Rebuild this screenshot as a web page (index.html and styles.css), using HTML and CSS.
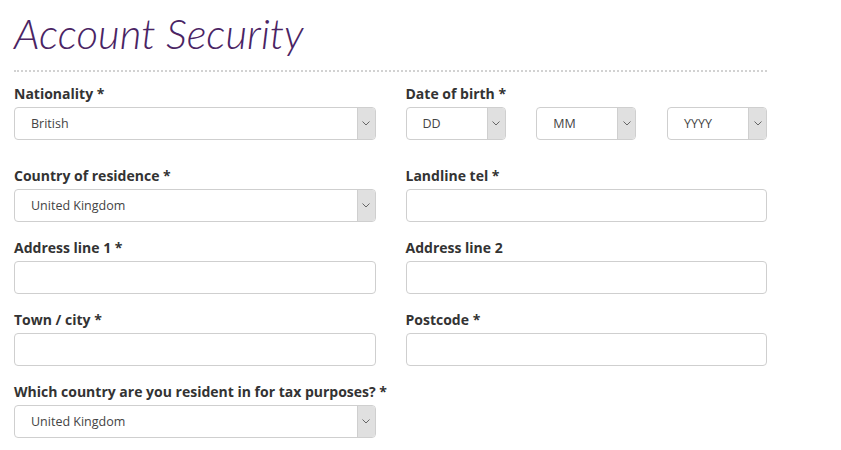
FILE: index.html
```html
<!DOCTYPE html>
<html lang="en">
<head>
<meta charset="utf-8">
<title>Account Security</title>
<link rel="stylesheet" href="styles.css">
</head>
<body>
<div class="page">
  <h1 class="title">Account Security</h1>
  <div class="rule"></div>
  <form class="form">
    <div class="field row-first">
      <label class="label">Nationality *</label>
      <div class="select"><span class="value">British</span><span class="arrow"><svg width="8" height="5" viewBox="0 0 8 5"><path d="M0.5 0.5 L4 4 L7.5 0.5" fill="none" stroke="#666" stroke-width="1"/></svg></span></div>
    </div>
    <div class="field row-first">
      <label class="label">Date of birth *</label>
      <div class="dob">
        <div class="select small"><span class="value">DD</span><span class="arrow"><svg width="8" height="5" viewBox="0 0 8 5"><path d="M0.5 0.5 L4 4 L7.5 0.5" fill="none" stroke="#666" stroke-width="1"/></svg></span></div>
        <div class="select small"><span class="value">MM</span><span class="arrow"><svg width="8" height="5" viewBox="0 0 8 5"><path d="M0.5 0.5 L4 4 L7.5 0.5" fill="none" stroke="#666" stroke-width="1"/></svg></span></div>
        <div class="select small"><span class="value">YYYY</span><span class="arrow"><svg width="8" height="5" viewBox="0 0 8 5"><path d="M0.5 0.5 L4 4 L7.5 0.5" fill="none" stroke="#666" stroke-width="1"/></svg></span></div>
      </div>
    </div>
    <div class="field">
      <label class="label">Country of residence *</label>
      <div class="select"><span class="value">United Kingdom</span><span class="arrow"><svg width="8" height="5" viewBox="0 0 8 5"><path d="M0.5 0.5 L4 4 L7.5 0.5" fill="none" stroke="#666" stroke-width="1"/></svg></span></div>
    </div>
    <div class="field">
      <label class="label">Landline tel *</label>
      <div class="input"></div>
    </div>
    <div class="field">
      <label class="label">Address line 1 *</label>
      <div class="input"></div>
    </div>
    <div class="field">
      <label class="label">Address line 2</label>
      <div class="input"></div>
    </div>
    <div class="field">
      <label class="label">Town / city *</label>
      <div class="input"></div>
    </div>
    <div class="field">
      <label class="label">Postcode *</label>
      <div class="input"></div>
    </div>
    <div class="field">
      <label class="label">Which country are you resident in for tax purposes? *</label>
      <div class="select"><span class="value">United Kingdom</span><span class="arrow"><svg width="8" height="5" viewBox="0 0 8 5"><path d="M0.5 0.5 L4 4 L7.5 0.5" fill="none" stroke="#666" stroke-width="1"/></svg></span></div>
    </div>
  </form>
</div>
</body>
</html>
```

FILE: styles.css
```css
* { box-sizing: border-box; }
html, body { margin: 0; padding: 0; background: #fff; }
body { font-family: "Open Sans", "Noto Sans", sans-serif; color: #333; }
.page { padding: 0 0 0 14px; width: 767px; }
.title {
  margin: 0;
  padding-top: 8px;
  font-family: Lato, "Open Sans", sans-serif;
  font-weight: 300;
  font-style: italic;
  font-size: 42px;
  line-height: 50px;
  color: #4a2464;
}
.rule { margin-top: 12px; border-top: 2px dotted #d2d2d2; }
.form {
  display: grid;
  grid-template-columns: minmax(0, 1fr) minmax(0, 1fr);
  column-gap: 30px;
  row-gap: 15px;
  margin-top: 11px;
}
.row-first { margin-bottom: 10px; }
.field { display: flex; flex-direction: column; gap: 3px; min-width: 0; }
.label {
  padding-top: 1px;
  font-size: 14px;
  font-weight: 700;
  line-height: 20px;
  color: #333;
  white-space: nowrap;
}
.select, .input {
  height: 33px;
  border: 1px solid #cfcfcf;
  border-radius: 4px;
  background: #fff;
  display: flex;
  align-items: center;
}
.select .value {
  flex: 1;
  padding-left: 16px;
  font-size: 12.5px;
  color: #444;
}
.select .arrow {
  width: 18px;
  align-self: stretch;
  background: #e0e0e0;
  border-left: 1px solid #cfcfcf;
  border-radius: 0 3px 3px 0;
  display: flex;
  align-items: center;
  justify-content: center;
}
.dob { display: flex; justify-content: space-between; }
.select.small { width: 100px; }
```
